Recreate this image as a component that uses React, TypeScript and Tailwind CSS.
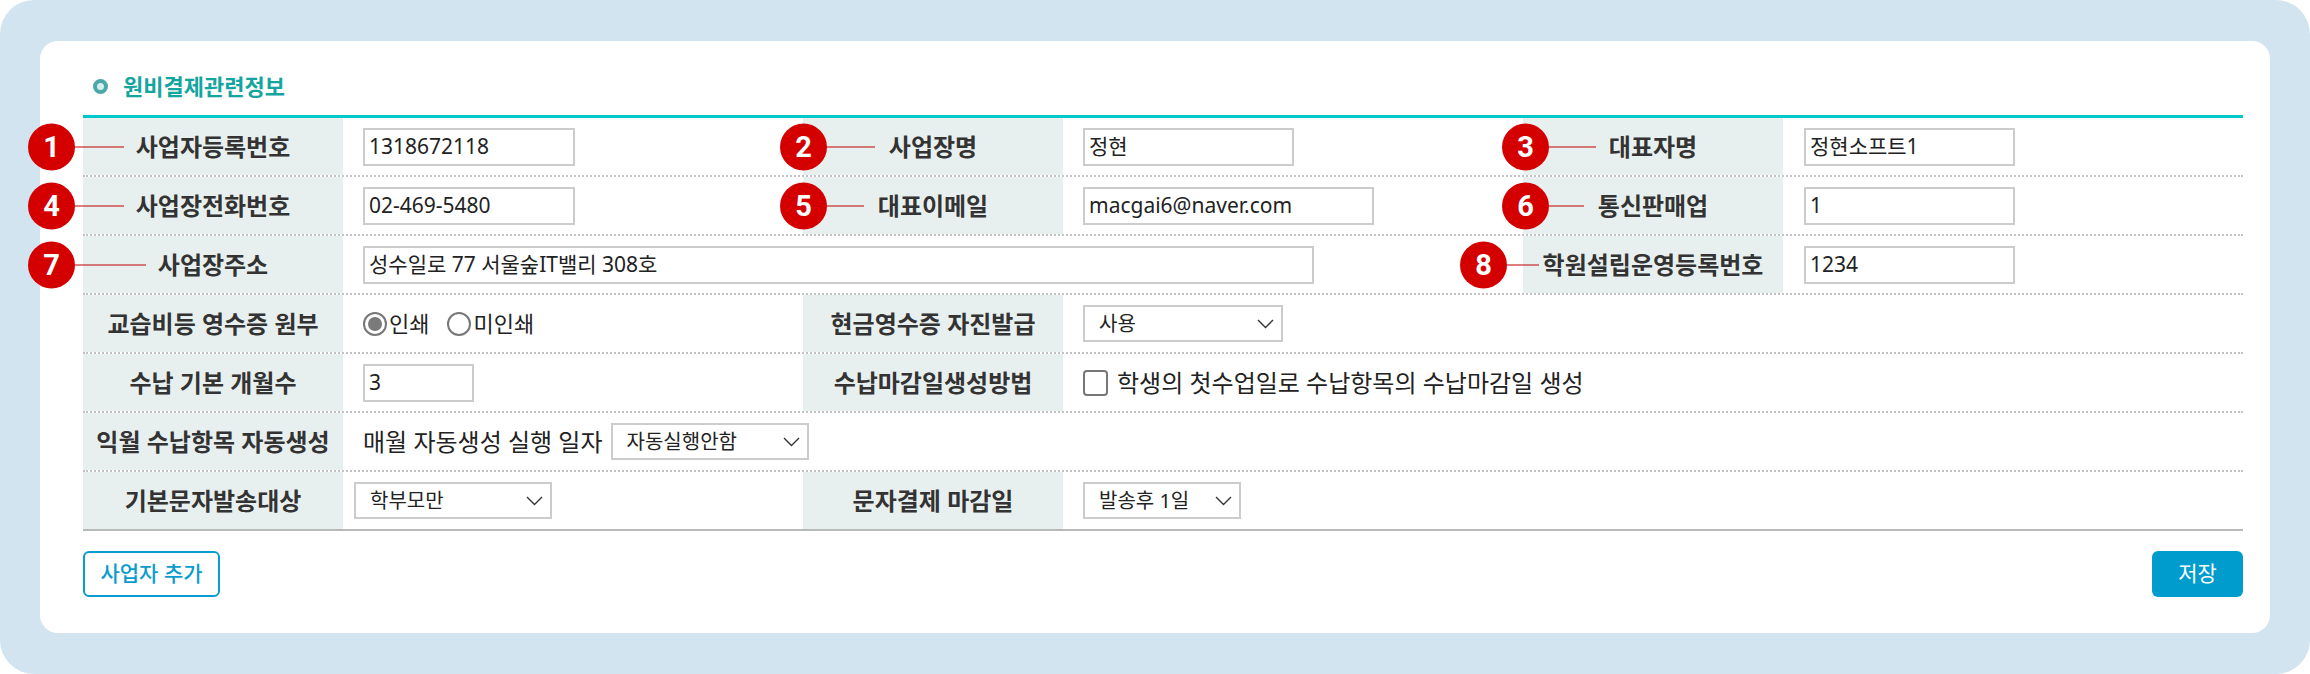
import React from "react";

function Badge({ n, pos, line }: { n: string; pos: string; line: string }) {
  return (
    <div className={`absolute top-1/2 -translate-y-1/2 flex items-center ${pos}`}>
      <div className="w-[47px] h-[47px] rounded-full bg-[#d40000] flex items-center justify-center text-white font-['Roboto',sans-serif] font-bold text-[29px] leading-none">
        {n}
      </div>
      <div className={`h-px bg-[#c00000] ${line}`} />
    </div>
  );
}

function Label({ children, badge }: { children: React.ReactNode; badge?: React.ReactNode }) {
  return (
    <div className="relative bg-[#e8f0ef] flex items-center justify-center font-bold text-[24px] text-[#333] whitespace-nowrap">
      {badge}
      {children}
    </div>
  );
}

function Value({ children, span = "", pad = "pl-[20px]" }: { children?: React.ReactNode; span?: string; pad?: string }) {
  return <div className={`flex items-center ${pad} ${span}`}>{children}</div>;
}

function Input({ value, w }: { value: string; w: string }) {
  return (
    <div className={`h-[38px] border-2 border-[#cccccc] bg-white flex items-center pl-[4px] text-[21px] text-[#222] ${w}`}>
      {value}
    </div>
  );
}

function Chevron() {
  return (
    <svg width="17" height="10" viewBox="0 0 17 10">
      <polyline points="1,1 8.5,8.5 16,1" fill="none" stroke="#333" strokeWidth="1.4" />
    </svg>
  );
}

function Select({ value, w }: { value: string; w: string }) {
  return (
    <div className={`h-[37px] border-2 border-[#cccccc] bg-white flex items-center justify-between pl-[14px] pr-[7px] text-[20px] text-[#222] ${w}`}>
      <span>{value}</span>
      <Chevron />
    </div>
  );
}

function Radio({ checked, label }: { checked: boolean; label: string }) {
  return (
    <div className="flex items-center text-[22px] text-[#222]">
      <div className="w-[24px] h-[24px] rounded-full border-2 border-[#777] bg-white flex items-center justify-center">
        {checked && <div className="w-[14px] h-[14px] rounded-full bg-[#7a7a7a]" />}
      </div>
      <span className="ml-[2px]">{label}</span>
    </div>
  );
}

const row = "grid grid-cols-[260px_460px_260px_460px_260px_460px] h-[59px] border-b-2 border-dotted border-[#c2c2c2]";

export default function App() {
  return (
    <div className="w-[2310px] h-[674px] bg-white font-['Noto_Sans','Noto_Sans_CJK_KR',sans-serif]">
      <div className="h-full rounded-[34px] bg-[#d3e4f1] pt-[41px] px-[40px] pb-[41px]">
        <div className="h-full rounded-[18px] bg-white pl-[43px] pr-[27px] pt-[30px]">
          <div className="flex items-center h-[30px] pl-[10px]">
            <div className="w-[15px] h-[15px] rounded-full border-[4px] border-[#4aa9a9] bg-[#d8eeee]" />
            <div className="ml-[15px] text-[22px] font-bold text-[#14a5a1]">원비결제관련정보</div>
          </div>
          <div className="mt-[14px] border-t-[3px] border-[#00c8c8]">
            <div className={row}>
              <Label badge={<Badge n="1" pos="left-[-55px]" line="w-[49px]" />}>사업자등록번호</Label>
              <Value><Input value="1318672118" w="w-[212px]" /></Value>
              <Label badge={<Badge n="2" pos="left-[-23px]" line="w-[48px]" />}>사업장명</Label>
              <Value><Input value="정현" w="w-[211px]" /></Value>
              <Label badge={<Badge n="3" pos="left-[-21px]" line="w-[47px]" />}>대표자명</Label>
              <Value pad="pl-[21px]"><Input value="정현소프트1" w="w-[211px]" /></Value>
            </div>
            <div className={row}>
              <Label badge={<Badge n="4" pos="left-[-55px]" line="w-[49px]" />}>사업장전화번호</Label>
              <Value><Input value="02-469-5480" w="w-[212px]" /></Value>
              <Label badge={<Badge n="5" pos="left-[-23px]" line="w-[37px]" />}>대표이메일</Label>
              <Value><Input value="macgai6@naver.com" w="w-[291px]" /></Value>
              <Label badge={<Badge n="6" pos="left-[-21px]" line="w-[35px]" />}>통신판매업</Label>
              <Value pad="pl-[21px]"><Input value="1" w="w-[211px]" /></Value>
            </div>
            <div className={row}>
              <Label badge={<Badge n="7" pos="left-[-55px]" line="w-[71px]" />}>사업장주소</Label>
              <Value span="col-span-3"><Input value="성수일로 77 서울숲IT밸리 308호" w="w-[951px]" /></Value>
              <Label badge={<Badge n="8" pos="left-[-63px]" line="w-[32px]" />}>학원설립운영등록번호</Label>
              <Value pad="pl-[21px]"><Input value="1234" w="w-[211px]" /></Value>
            </div>
            <div className={row}>
              <Label>교습비등 영수증 원부</Label>
              <Value>
                <div className="flex items-center gap-[18px]">
                  <Radio checked label="인쇄" />
                  <Radio checked={false} label="미인쇄" />
                </div>
              </Value>
              <Label>현금영수증 자진발급</Label>
              <Value span="col-span-3"><Select value="사용" w="w-[200px]" /></Value>
            </div>
            <div className={row}>
              <Label>수납 기본 개월수</Label>
              <Value><Input value="3" w="w-[111px]" /></Value>
              <Label>수납마감일생성방법</Label>
              <Value span="col-span-3">
                <div className="flex items-center text-[24px] text-[#222]">
                  <div className="w-[25px] h-[26px] rounded-[4px] border-2 border-[#777] bg-white" />
                  <span className="ml-[9px]">학생의 첫수업일로 수납항목의 수납마감일 생성</span>
                </div>
              </Value>
            </div>
            <div className={row}>
              <Label>익월 수납항목 자동생성</Label>
              <Value span="col-span-5">
                <span className="text-[24px] text-[#222]">매월 자동생성 실행 일자</span>
                <div className="ml-[8px]"><Select value="자동실행안함" w="w-[198px]" /></div>
              </Value>
            </div>
            <div className="grid grid-cols-[260px_460px_260px_460px_260px_460px] h-[59px] border-b-2 border-solid border-[#b9b9b9]">
              <Label>기본문자발송대상</Label>
              <Value pad="pl-[11px]"><Select value="학부모만" w="w-[198px]" /></Value>
              <Label>문자결제 마감일</Label>
              <Value span="col-span-3"><Select value="발송후 1일" w="w-[158px]" /></Value>
            </div>
          </div>
          <div className="mt-[20px] flex justify-between">
            <div className="w-[137px] h-[46px] rounded-[6px] border-2 border-[#0a9ccf] text-[#0a9ccf] text-[21px] font-medium flex items-center justify-center">
              사업자 추가
            </div>
            <div className="w-[91px] h-[46px] rounded-[6px] bg-[#009ccd] text-white text-[21px] flex items-center justify-center">
              저장
            </div>
          </div>
        </div>
      </div>
    </div>
  );
}
